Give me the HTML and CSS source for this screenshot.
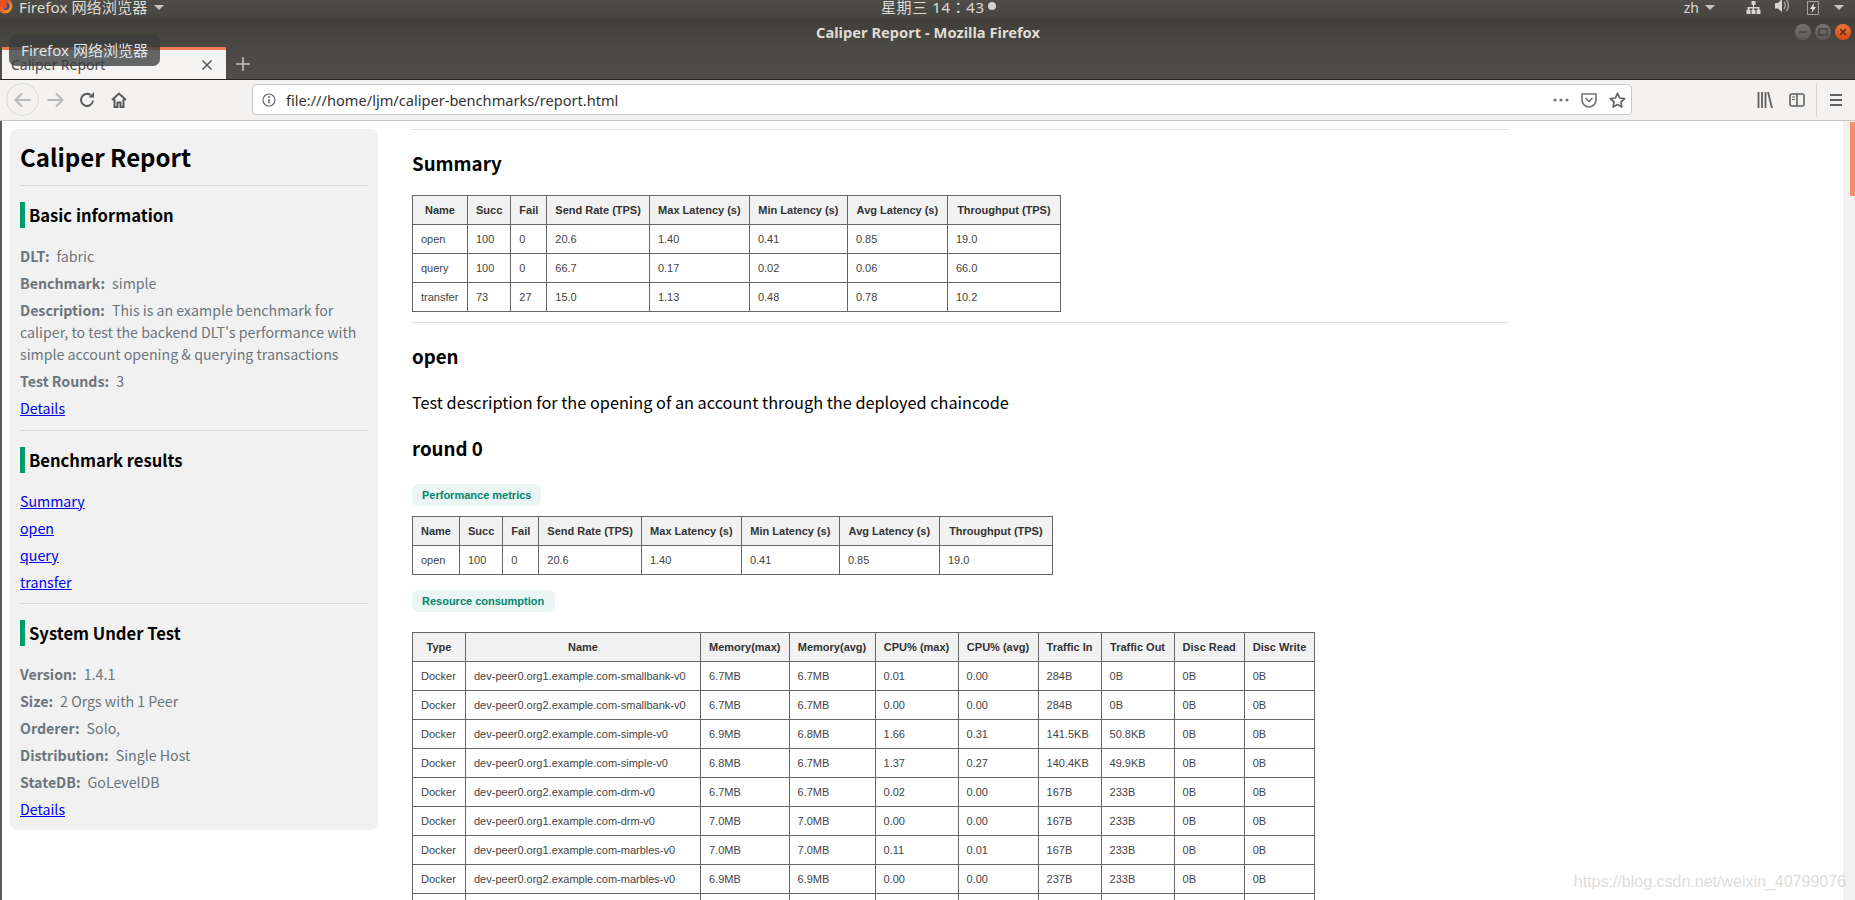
FILE: index.html
```html
<!DOCTYPE html>
<html lang="zh">
<head>
<meta charset="utf-8">
<title>Caliper Report - Mozilla Firefox</title>
<link rel="stylesheet" href="styles.css">
</head>
<body>
<div class="screen">
  <header class="panel">
    <div class="panel-left">
      <svg class="ff-logo" width="16" height="16" viewBox="0 0 16 16"><circle cx="8" cy="7" r="7.5" fill="#f08a24"/><circle cx="8.5" cy="7" r="4" fill="#3b4f9c"/><path d="M4 1c3-2 9-1 11 4-2-2-4-2-6-1 1 1 2 3 0 5-2 2-5 1-6-1 0 3 3 5 6 5-4 1-8-1-9-5 0-3 2-5 4-7z" fill="#e8501e"/></svg>
      <span class="panel-app">Firefox 网络浏览器</span>
      <span class="tri"></span>
    </div>
    <div class="panel-clock"><span lang="zh-Hant">星期三 14：43</span><span class="dot"></span></div>
    <div class="panel-right">
      <span class="zh">zh</span><span class="tri zh-tri"></span>
      <svg class="ind-net" width="15" height="14" viewBox="0 0 14 14"><path d="M5 0h4v4H7.500v2H13v3h1v4H10V9h1V7.500H7.500V9H9v4H5V9h1V7.500H3V9h1v4H0V9h1V6h5.500V4H5z" fill="#d9d6cf"/></svg>
      <svg class="ind-vol" width="16" height="14" viewBox="0 0 16 14"><path d="M0 4h3l4-4v13L3 9.500H0z" fill="#d9d6cf"/><path d="M9 3c1.500 2 1.500 5 0 7M11.500 1c2.500 3 2.500 8 0 11" fill="none" stroke="#a9a6a0" stroke-width="1.300"/></svg>
      <svg class="ind-bat" width="12" height="14" viewBox="0 0 12 14"><path d="M.5.500h11v13H.5z" fill="none" stroke="#a9a6a0"/><path d="M7 2 3 8h2.500L4.500 12 9 6H6.500z" fill="#e6e3dc"/></svg>
      <span class="tri last-tri"></span>
    </div>
  </header>

  <div class="titlebar">
    <div class="title-line">
      <span class="win-title">Caliper Report - Mozilla Firefox</span>
      <div class="win-buttons">
        <span class="win-btn"><svg width="10" height="10" viewBox="0 0 10 10"><path d="M1 5h8" stroke="#3c3b37" stroke-width="1.200"/></svg></span>
        <span class="win-btn"><svg width="10" height="10" viewBox="0 0 10 10"><rect x="1" y="2" width="8" height="6" fill="none" stroke="#3c3b37" stroke-width="1.200"/></svg></span>
        <span class="win-btn win-close"><svg width="10" height="10" viewBox="0 0 10 10"><path d="M2 2l6 6M8 2l-6 6" stroke="#3c2a20" stroke-width="1.200"/></svg></span>
      </div>
    </div>
    <div class="tabstrip">
      <div class="tab">
        <span class="tab-title">Caliper Report</span>
        <svg class="tab-close" width="12" height="12" viewBox="0 0 12 12"><path d="M1.500 1.500l9 9M10.500 1.500l-9 9" stroke="#55575a" stroke-width="1.500"/></svg>
      </div>
      <svg class="new-tab" width="14" height="14" viewBox="0 0 14 14"><path d="M7 0v14M0 7h14" stroke="#c9c6bf" stroke-width="1.500"/></svg>
    </div>
  </div>

  <nav class="toolbar">
    <span class="back-btn">
      <svg width="18" height="16" viewBox="0 0 18 16"><path d="M1.500 8h15M8 1.500 1.500 8 8 14.500" fill="none" stroke="#b9b9b9" stroke-width="2"/></svg>
    </span>
    <svg class="tb-forward" width="18" height="16" viewBox="0 0 18 16"><path d="M1.500 8h15M10 1.500 16.500 8 10 14.500" fill="none" stroke="#b9b9b9" stroke-width="2"/></svg>
    <svg class="tb-reload" width="16" height="16" viewBox="0 0 16 16"><path d="M14 8.500A6 6 0 1 1 11.500 3" fill="none" stroke="#5a5a5a" stroke-width="2"/><path d="M9.500 5.500H15V0z" fill="#5a5a5a"/></svg>
    <svg class="tb-home" width="16" height="16" viewBox="0 0 16 16"><path d="M1 8 8 1.500 15 8M3.500 7v8h3v-4.500h3V15h3V7" fill="none" stroke="#5a5a5a" stroke-width="2"/></svg>
    <div class="urlbar">
      <svg class="url-info" width="14" height="14" viewBox="0 0 14 14"><circle cx="7" cy="7" r="6" fill="none" stroke="#6a6a6a" stroke-width="1.200"/><path d="M7 6v4.500" stroke="#6a6a6a" stroke-width="1.500"/><circle cx="7" cy="3.900" r="1" fill="#6a6a6a"/></svg>
      <span class="url-text">file:///home/ljm/caliper-benchmarks/report.html</span>
      <span class="url-actions">
        <svg width="16" height="4" viewBox="0 0 16 4"><circle cx="2" cy="2" r="1.600" fill="#777"/><circle cx="8" cy="2" r="1.600" fill="#777"/><circle cx="14" cy="2" r="1.600" fill="#777"/></svg>
        <svg width="16" height="16" viewBox="0 0 16 16"><path d="M1 2h14v6a7 7 0 0 1-14 0z" fill="none" stroke="#777" stroke-width="1.700"/><path d="M4.500 6 8 9.500 11.500 6" fill="none" stroke="#777" stroke-width="1.700"/></svg>
        <svg width="17" height="16" viewBox="0 0 17 16"><path d="M8.500 1.300 10.600 6l5.100.6-3.800 3.400 1 5-4.400-2.500L4.100 15l1-5L1.300 6.600 6.400 6z" fill="none" stroke="#666" stroke-width="1.700" stroke-linejoin="round"/></svg>
      </span>
    </div>
    <div class="tb-right">
      <svg class="tb-lib" width="16" height="16" viewBox="0 0 16 16"><path d="M1.500 0v16M5 0v16M8.500 0v16M11 0l4 16" fill="none" stroke="#5f5f5f" stroke-width="1.800"/></svg>
      <svg class="tb-side" width="16" height="14" viewBox="0 0 16 14"><rect x="1" y="1" width="14" height="12" rx="2" fill="none" stroke="#5f5f5f" stroke-width="1.600"/><path d="M8 1v12" stroke="#5f5f5f" stroke-width="1.600"/><path d="M3 4h3M3 6.500h3" stroke="#5f5f5f"/></svg>
      <span class="tb-sep"></span>
      <svg class="tb-menu" width="12" height="14" viewBox="0 0 12 14"><path d="M0 2h12M0 7h12M0 12h12" stroke="#5f5f5f" stroke-width="1.800"/></svg>
    </div>
  </nav>

  <div class="page">
    <span class="edge"></span>
    <aside class="sidebar">
      <h1 class="side-title">Caliper Report</h1>
      <hr class="side-rule">
      <h2 class="side-head">Basic information</h2>
      <div class="side-list">
        <div><b>DLT:</b>fabric</div>
        <div><b>Benchmark:</b>simple</div>
        <div><b>Description:</b>This is an example benchmark for caliper, to test the backend DLT's performance with simple account opening &amp; querying transactions</div>
        <div><b>Test Rounds:</b>3</div>
        <div><a href="#">Details</a></div>
      </div>
      <hr class="side-rule side-rule-gap">
      <h2 class="side-head">Benchmark results</h2>
      <div class="side-list">
        <div><a href="#">Summary</a></div>
        <div><a href="#">open</a></div>
        <div><a href="#">query</a></div>
        <div><a href="#">transfer</a></div>
      </div>
      <hr class="side-rule side-rule-gap">
      <h2 class="side-head">System Under Test</h2>
      <div class="side-list">
        <div><b>Version:</b>1.4.1</div>
        <div><b>Size:</b>2 Orgs with 1 Peer</div>
        <div><b>Orderer:</b>Solo,</div>
        <div><b>Distribution:</b>Single Host</div>
        <div><b>StateDB:</b>GoLevelDB</div>
        <div><a href="#">Details</a></div>
      </div>
    </aside>

    <main class="content">
      <hr class="rule">
      <h3 class="sec-title sec-first">Summary</h3>
      <table class="grid grid-summary">
        <tr><th>Name</th><th>Succ</th><th>Fail</th><th>Send Rate (TPS)</th><th>Max Latency (s)</th><th>Min Latency (s)</th><th>Avg Latency (s)</th><th>Throughput (TPS)</th></tr>
        <tr><td>open</td><td>100</td><td>0</td><td>20.6</td><td>1.40</td><td>0.41</td><td>0.85</td><td>19.0</td></tr>
        <tr><td>query</td><td>100</td><td>0</td><td>66.7</td><td>0.17</td><td>0.02</td><td>0.06</td><td>66.0</td></tr>
        <tr><td>transfer</td><td>73</td><td>27</td><td>15.0</td><td>1.13</td><td>0.48</td><td>0.78</td><td>10.2</td></tr>
      </table>
      <hr class="rule rule-after">
      <h3 class="sec-title sec-open">open</h3>
      <p class="sec-desc">Test description for the opening of an account through the deployed chaincode</p>
      <h3 class="sec-title sec-round">round 0</h3>
      <div class="tag tag-perf">Performance metrics</div>
      <table class="grid grid-perf">
        <tr><th>Name</th><th>Succ</th><th>Fail</th><th>Send Rate (TPS)</th><th>Max Latency (s)</th><th>Min Latency (s)</th><th>Avg Latency (s)</th><th>Throughput (TPS)</th></tr>
        <tr><td>open</td><td>100</td><td>0</td><td>20.6</td><td>1.40</td><td>0.41</td><td>0.85</td><td>19.0</td></tr>
      </table>
      <div class="tag tag-res">Resource consumption</div>
      <table class="grid grid-res">
        <tr><th>Type</th><th>Name</th><th>Memory(max)</th><th>Memory(avg)</th><th>CPU% (max)</th><th>CPU% (avg)</th><th>Traffic In</th><th>Traffic Out</th><th>Disc Read</th><th>Disc Write</th></tr>
        <tr><td>Docker</td><td>dev-peer0.org1.example.com-smallbank-v0</td><td>6.7MB</td><td>6.7MB</td><td>0.01</td><td>0.00</td><td>284B</td><td>0B</td><td>0B</td><td>0B</td></tr>
        <tr><td>Docker</td><td>dev-peer0.org2.example.com-smallbank-v0</td><td>6.7MB</td><td>6.7MB</td><td>0.00</td><td>0.00</td><td>284B</td><td>0B</td><td>0B</td><td>0B</td></tr>
        <tr><td>Docker</td><td>dev-peer0.org2.example.com-simple-v0</td><td>6.9MB</td><td>6.8MB</td><td>1.66</td><td>0.31</td><td>141.5KB</td><td>50.8KB</td><td>0B</td><td>0B</td></tr>
        <tr><td>Docker</td><td>dev-peer0.org1.example.com-simple-v0</td><td>6.8MB</td><td>6.7MB</td><td>1.37</td><td>0.27</td><td>140.4KB</td><td>49.9KB</td><td>0B</td><td>0B</td></tr>
        <tr><td>Docker</td><td>dev-peer0.org2.example.com-drm-v0</td><td>6.7MB</td><td>6.7MB</td><td>0.02</td><td>0.00</td><td>167B</td><td>233B</td><td>0B</td><td>0B</td></tr>
        <tr><td>Docker</td><td>dev-peer0.org1.example.com-drm-v0</td><td>7.0MB</td><td>7.0MB</td><td>0.00</td><td>0.00</td><td>167B</td><td>233B</td><td>0B</td><td>0B</td></tr>
        <tr><td>Docker</td><td>dev-peer0.org1.example.com-marbles-v0</td><td>7.0MB</td><td>7.0MB</td><td>0.11</td><td>0.01</td><td>167B</td><td>233B</td><td>0B</td><td>0B</td></tr>
        <tr><td>Docker</td><td>dev-peer0.org2.example.com-marbles-v0</td><td>6.9MB</td><td>6.9MB</td><td>0.00</td><td>0.00</td><td>237B</td><td>233B</td><td>0B</td><td>0B</td></tr>
        <tr><td>&nbsp;</td><td></td><td></td><td></td><td></td><td></td><td></td><td></td><td></td><td></td></tr>
      </table>
    </main>

    <div class="scrollbar"><span class="thumb"></span></div>
  </div>

  <div class="tooltip">Firefox 网络浏览器</div>
  <div class="watermark">https://blog.csdn.net/weixin_40799076</div>
</div>
</body>
</html>
```

FILE: styles.css
```css
* { box-sizing: border-box; }
html, body { margin: 0; padding: 0; background: #fff; }
.screen {
  position: relative;
  width: 1855px;
  height: 900px;
  overflow: hidden;
  display: flex;
  flex-direction: column;
  font-family: "Noto Sans CJK SC", "Noto Sans", sans-serif;
}

/* Desktop panel */
.panel {
  height: 19px;
  flex: none;
  display: flex;
  align-items: flex-start;
  background: linear-gradient(#4f4d48, #46443f);
  color: #dedbd4;
  font-size: 15.2px;
  line-height: 15px;
  position: relative;
}
.panel-left { display: flex; align-items: center; height: 15px; width: 800px; }
.ff-logo { margin-left: -3px; margin-top: -2px; }
.panel-app { margin-left: 6px; font-family: "Noto Sans", "Noto Sans CJK SC", sans-serif; white-space: nowrap; }
.tri { width: 0; height: 0; border-left: 5px solid transparent; border-right: 5px solid transparent; border-top: 5px solid #c8c5be; margin-left: 7px; }
.panel-clock { display: flex; align-items: center; height: 15px; margin-left: 81px; gap: 3px; font-family: "Noto Sans", "Noto Sans CJK TC", sans-serif; font-size: 15px; white-space: nowrap; }
.panel-clock span:first-child { letter-spacing: 0.6px; }
.dot { width: 8px; height: 8px; border-radius: 50%; background: #d4d2cc; margin-top: -4px; }
.panel-right { margin-left: auto; display: flex; align-items: center; height: 15px; padding-right: 11px; }
.zh { font-family: "Noto Sans", sans-serif; font-size: 14px; }
.zh-tri { margin-left: 6px; }
.ind-net { margin-left: 31px; }
.ind-vol { margin-left: 14px; margin-top: -3px; }
.ind-bat { margin-left: 16px; }
.last-tri { margin-left: 15px; }

/* Window title bar */
.titlebar {
  height: 61px;
  flex: none;
  background: linear-gradient(#403e39 0, #4b4944 28px, #504d47 100%);
  border-bottom: 1px solid #24231f;
  display: flex;
  flex-direction: column;
}
.title-line { height: 28px; flex: none; display: flex; align-items: center; justify-content: center; position: relative; }
.win-title { color: #dfdbd2; font-family: "Noto Sans", sans-serif; font-weight: 700; font-size: 14.7px; margin-top: -2px; margin-left: 1px; }
.win-buttons { position: absolute; right: 4px; top: 5px; display: flex; gap: 4px; }
.win-btn { width: 16px; height: 16px; border-radius: 50%; background: linear-gradient(#75736e, #5b5955); display: flex; align-items: center; justify-content: center; }
.win-close { background: linear-gradient(#f0703c, #d94a17); }
.tabstrip { flex: 1; display: flex; align-items: stretch; padding-left: 2px; }
.tab {
  width: 224px;
  background: #f4f3f1;
  border-top: 3px solid #ee7a52;
  display: flex;
  align-items: center;
  justify-content: space-between;
  padding: 0 13px 0 9px;
  color: #4a4a4d;
  font-family: "Noto Sans", sans-serif;
  font-size: 14px;
}
.new-tab { align-self: center; margin-left: 10px; margin-top: 1px; }

/* Toolbar */
.toolbar {
  height: 41px;
  flex: none;
  background: #f3f2f0;
  border-bottom: 1px solid #c6c6c6;
  display: flex;
  align-items: center;
  padding: 0 0 1px 6px;
}
.back-btn { width: 33px; height: 33px; border-radius: 50%; border: 1px solid #d8d8d8; display: flex; align-items: center; justify-content: center; }
.tb-forward { margin-left: 7px; }
.tb-reload { margin-left: 15px; }
.tb-home { margin-left: 16px; }
.urlbar {
  width: 1380px;
  height: 31px;
  margin-left: 125px;
  background: #fff;
  border: 1px solid #c9c9c9;
  border-radius: 4px;
  display: flex;
  align-items: center;
  padding: 0 5px 0 9px;
}
.url-text { margin-left: 10px; font-family: "Noto Sans", sans-serif; font-size: 14.6px; color: #333; white-space: nowrap; }
.url-actions { margin-left: auto; display: flex; align-items: center; gap: 12px; }
.tb-right { margin-left: auto; display: flex; align-items: center; padding-right: 13px; }
.tb-sep { width: 1px; height: 34px; background: #d4d4d4; margin-left: 11px; }
.tb-side { margin-left: 16px; }
.tb-menu { margin-left: 13px; }

/* Page */
.page { flex: 1; min-height: 0; display: flex; align-items: flex-start; background: #fff; }
.edge { width: 2px; align-self: stretch; background: #5c5b57; flex: none; }
.sidebar {
  width: 368px;
  flex: none;
  margin: 8px 34px 0 8px;
  padding: 10px;
  background: #f1f1f1;
  border-radius: 7px;
  font-size: 14.2px;
  line-height: 22px;
  color: #6c757d;
}
.side-title { margin: 0 0 10px; font-size: 24px; line-height: 36px; font-weight: 700; color: #000; }
.side-rule { margin: 0; height: 1px; border: 0; background: #d8d8d8; }
.side-rule-gap { margin-top: 10.5px; }
.side-head {
  margin: 16px 0 17px;
  height: 26px;
  border-left: 5px solid #009b6b;
  padding-left: 4px;
  font-size: 16.6px;
  line-height: 26px;
  font-weight: 700;
  color: #000;
}
.side-list { display: flex; flex-direction: column; gap: 5px; }
.side-list b { margin-right: 7px; }
.side-list a { color: #0000ee; }

.content { width: 1096px; flex: none; padding-top: 8px; }
.rule { margin: 0; height: 1px; border: 0; background: #ddd; }
.rule-after { margin-top: 10px; }
.sec-title { margin: 0; font-size: 18.7px; line-height: 28px; font-weight: 700; color: #000; }
.sec-first { margin: 19px 0 18px; }
.sec-open { margin-top: 19px; }
.sec-desc { margin: 19px 0 19px; font-size: 16.3px; line-height: 26px; color: #000; }
.tag {
  width: fit-content;
  height: 22px;
  padding: 0 10px;
  background: #ebf5f3;
  border-radius: 6px;
  color: #00876f;
  font-family: "Liberation Sans", sans-serif;
  font-size: 11px;
  font-weight: 700;
  line-height: 22px;
}
.tag-perf { margin: 22px 0 10px; }
.tag-res { margin: 15px 0 20px; padding-right: 11px; }
.grid {
  border-collapse: collapse;
  font-family: "Liberation Sans", sans-serif;
  font-size: 11px;
  line-height: 12px;
  color: #444;
}
.grid th, .grid td { border: 1px solid #666; padding: 8px; white-space: nowrap; }
.grid th { background: #f2f2f2; color: #333; font-weight: 700; }
.grid td { text-align: left; }

/* Column widths of the two metric tables */
.grid-summary th:nth-child(1) { width: 55px; }
.grid-perf th:nth-child(1) { width: 47px; }
.grid-summary th:nth-child(2), .grid-perf th:nth-child(2) { width: 43px; }
.grid-summary th:nth-child(3), .grid-perf th:nth-child(3) { width: 36px; }
.grid-summary th:nth-child(4), .grid-perf th:nth-child(4) { width: 102px; }
.grid-summary th:nth-child(5), .grid-perf th:nth-child(5) { width: 100px; }
.grid-summary th:nth-child(6), .grid-perf th:nth-child(6) { width: 98px; }
.grid-summary th:nth-child(7), .grid-perf th:nth-child(7) { width: 100px; }
.grid-summary th:nth-child(8), .grid-perf th:nth-child(8) { width: 113px; }

/* Column widths of the resource table */
.grid-res th:nth-child(1) { width: 53px; }
.grid-res th:nth-child(2) { width: 235px; }
.grid-res th:nth-child(3) { width: 88px; }
.grid-res th:nth-child(4) { width: 86px; }
.grid-res th:nth-child(5) { width: 83px; }
.grid-res th:nth-child(6) { width: 80px; }
.grid-res th:nth-child(7) { width: 63px; }
.grid-res th:nth-child(8) { width: 73px; }
.grid-res th:nth-child(9) { width: 70px; }
.grid-res th:nth-child(10) { width: 70px; }

.scrollbar { margin-left: auto; width: 12px; flex: none; align-self: stretch; background: #f1f1f1; display: flex; justify-content: flex-end; }
.thumb { width: 5px; height: 74px; margin-top: 1px; background: #f49066; }

/* Overlays */
.tooltip {
  position: absolute;
  left: 9px;
  top: 35px;
  width: 151px;
  height: 31px;
  border-radius: 7px;
  background: rgba(58, 60, 60, 0.78);
  color: #dce4e8;
  font-family: "Noto Sans", "Noto Sans CJK SC", sans-serif;
  font-size: 15px;
  line-height: 31px;
  text-align: center;
  white-space: nowrap;
}
.watermark {
  position: absolute;
  right: 9px;
  top: 872px;
  color: rgba(190, 190, 190, 0.55);
  font-family: "Liberation Sans", sans-serif;
  font-size: 16px;
  line-height: 20px;
  white-space: nowrap;
}
```
